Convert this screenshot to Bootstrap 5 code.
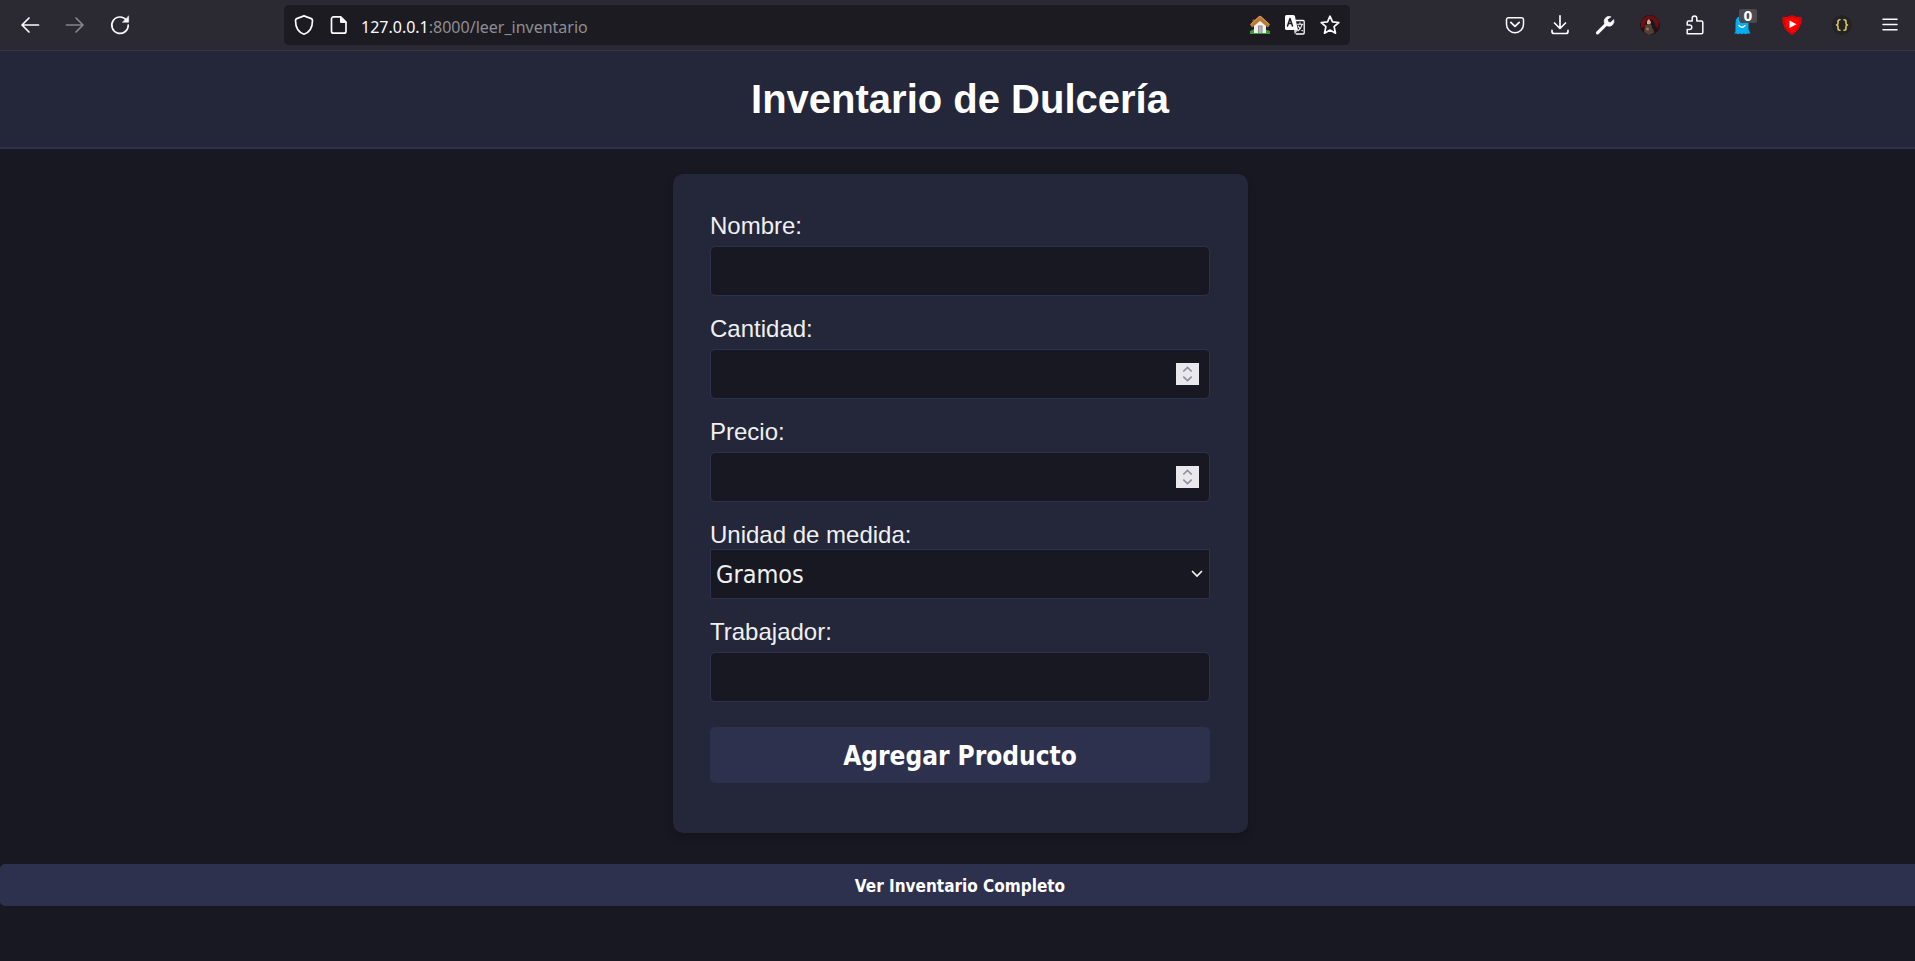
<!DOCTYPE html>
<html lang="es">
<head>
<meta charset="utf-8">
<meta name="viewport" content="width=device-width, initial-scale=1">
<title>Inventario de Dulcería</title>
<link rel="stylesheet" href="https://cdn.jsdelivr.net/npm/bootstrap@5.3.0/dist/css/bootstrap.min.css">
<style>
  :root { --ink: #181822; --panel: #24263a; --accent: #2e314d; --chrome: #2b2a33; }
  body { background: var(--ink); color: #f0f0f0; font-family: "Liberation Sans", Arial, sans-serif; overflow-x: hidden; }

  /* browser toolbar */
  .toolbar { height: 51px; background: var(--chrome); border-bottom: 1px solid #38383d; padding: 5px 3px 5px 7px; }
  .tool { width: 45px; height: 40px; padding: 0; border: 0; background: none; color: #fbfbfe; position: relative; }
  .tool-wide { width: 50px; }
  .tool:disabled { color: #85848b; }
  .tool svg { display: block; margin: auto; overflow: visible; fill: none; stroke: currentColor; stroke-width: 1.7; stroke-linecap: round; stroke-linejoin: round; }
  .tool svg.flat { stroke: none; }
  .spacer { flex: 0 1 142px; }
  .urlbar { height: 40px; background: #1c1b22; border-radius: 5px; padding: 0 3px 0 2px; color: #fbfbfe; min-width: 0; }
  .urlbar .tool { width: 35px; }
  .address { font: 16px/24px "Noto Sans", "Open Sans", sans-serif; color: #8f8e94; padding: 3px 0 0 5px; }
  .address b { font-weight: 400; color: #fbfbfe; }
  .counter { position: absolute; left: 22px; top: 4px; width: 18px; height: 14px; border-radius: 2px; background: #4a4a4f; color: #fff; font: bold 14px/14px "DejaVu Sans Condensed", sans-serif; }

  /* page */
  .page-head { background: var(--panel); border-bottom: 2px solid var(--accent); padding: 25px 0 25px 5px; }
  .page-head h1 { font-size: 40px; line-height: 46px; font-weight: 700; color: #fff; }
  .form-area { padding: 25px 0 31px 6px; }
  .panel { width: 100%; max-width: 575px; background: var(--panel); border-radius: 10px; padding: 37px 38px 50px 37px; box-shadow: 0 4px 8px rgba(0,0,0,.2); }
  .field { margin-bottom: 18px; }
  .field label { display: block; font-size: 24px; line-height: 29px; margin-bottom: 6px; }
  .field-tight label { margin-bottom: 0; }
  .field .form-control, .field .form-select { height: 50px; background-color: var(--ink); border: 1px solid var(--accent); color: #f0f0f0; border-radius: 5px; font-size: 24px; }
  .field .form-select { border-radius: 0; padding: 2px 30px 0 5px; font: 25px/44px "DejaVu Sans Condensed", Tahoma, sans-serif;
    background-image: url("data:image/svg+xml,%3Csvg xmlns='http://www.w3.org/2000/svg' viewBox='0 0 12 8'%3E%3Cpath d='M1.5 1.5 6 6l4.500-4.500' fill='none' stroke='%23f4f4f4' stroke-width='1.700' stroke-linecap='round'/%3E%3C/svg%3E");
    background-size: 12px 8px; background-position: right 6px center; }
  .field input[type=number] { appearance: textfield; -moz-appearance: textfield; padding-right: 40px; background-repeat: no-repeat; background-position: right 10px center; background-size: 23px 22px;
    background-image: url("data:image/svg+xml,%3Csvg xmlns='http://www.w3.org/2000/svg' viewBox='0 0 23 22'%3E%3Cpath fill='%23e9e9ed' d='M0 0h23v22H0z'/%3E%3Cpath d='m7.800 8 3.700-3.500L15.200 8M7.800 14.200l3.700 3.500 3.700-3.500' fill='none' stroke='%238f8f9d' stroke-width='1.700' stroke-linecap='round'/%3E%3C/svg%3E"); }
  .field input[type=number]::-webkit-inner-spin-button { appearance: none; -webkit-appearance: none; margin: 0; }
  .action { background: var(--accent); color: #fff; border: 0; border-radius: 5px; font-family: "DejaVu Sans Condensed", Tahoma, sans-serif; font-weight: 700; }
  .action:hover { background: #393d60; color: #fff; }
  .action-add { margin-top: 25px; padding: 13px 0 11px; font-size: 26px; line-height: 32px; }
  .action-all { padding: 12px 0 10px 5px; font-size: 17px; line-height: 20px; border-radius: 5px 0 0 5px; }
</style>
</head>
<body>

<nav class="toolbar d-flex align-items-center" aria-label="Navegador">
  <button class="tool" type="button" aria-label="Atrás"><svg width="20" height="20"><path d="M18.500 10H2M9 3 2 10l7 7"/></svg></button>
  <button class="tool" type="button" aria-label="Adelante" disabled><svg width="20" height="20"><path d="M1.500 10H18M11 3l7 7-7 7"/></svg></button>
  <button class="tool" type="button" aria-label="Recargar"><svg width="20" height="20"><path d="M16.500 5.200A8.200 8.200 0 1 0 18.200 10"/><path d="M18.600 1.300v5.900h-5.900z" fill="currentColor" stroke-width=".6"/></svg></button>
  <div class="spacer"></div>

  <div class="urlbar d-flex align-items-center flex-grow-1">
    <button class="tool" type="button" aria-label="Protección"><svg width="20" height="20"><path d="M10 .9 17.300 3.600Q18.500 4.100 18.500 5.500C18.500 12.500 15 17.500 10 19.200 5 17.500 1.500 12.500 1.500 5.500Q1.500 4.100 2.700 3.600z"/></svg></button>
    <button class="tool" type="button" aria-label="Información del sitio"><svg width="20" height="20"><path d="M4.500 1.900h7.200l5.300 5.300v9a2 2 0 0 1-2 2H4.500a2 2 0 0 1-2-2V3.900a2 2 0 0 1 2-2z"/><path d="M11.500 2v5.400H17z" fill="currentColor" stroke-width="1"/></svg></button>
    <div class="address flex-grow-1 text-truncate"><b>127.0.0.1</b>:8000/leer_inventario</div>
    <button class="tool" type="button" aria-label="Inicio"><svg class="flat" width="20" height="20"><path d="M0 16q4-3 10-2.500T20 16v3H0z" fill="#3f9a3c"/><path d="M4 9.500 10 4l6 5.500V18H4z" fill="#f1f0ee"/><path d="M2.500 4.500h3v4h-3z" fill="#9a5a2a"/><path d="M8 10.500h4.500V18H8z" fill="#8d8d8d"/><path d="M9 11.500h2.500V18H9z" fill="#b4b4b4"/><path d="M0 9.500 8.500 1.400q1.500-1.200 3 0L20 9.500 17.800 12.500 10 6 2.200 12.500z" fill="#b97a38"/><path d="M1 9.200 9 1.900q1-.8 2 0L19 9.200" stroke="#d99c50" stroke-width="1"/></svg></button>
    <button class="tool" type="button" aria-label="Traducir"><svg width="20" height="20"><path d="M11 5.500h7.200q1 0 1 1v11.500q0 1-1 1h-7" stroke-width="1.300"/><path d="M1.500 0h6.700q1.300 0 1.700 1.300L13 15H1.500Q0 15 0 13.500v-12Q0 0 1.500 0z" fill="#fbfbfe" stroke="none"/><path d="M9 15h4l-3.300 4.300z" fill="#d0d0d6" stroke="none"/><path d="M2.500 11 5 3.500 7.500 11M3.400 8.500h3.200" stroke="#1c1b22" stroke-width="1.500"/><path d="M12.500 9.300h5.300M15 7.700v1.600M17 9.800q-1 4-4 6M13.300 11q1.500 3.500 4.200 4.800" stroke-width="1.100"/></svg></button>
    <button class="tool" type="button" aria-label="Marcador"><svg width="20" height="20"><path d="m10 1.200 2.500 5.700 6.300.6-4.700 4.200 1.400 6.500L10 15l-5.500 3.200 1.400-6.500L1.200 7.500l6.300-.6z"/></svg></button>
  </div>

  <div class="spacer"></div>
  <button class="tool" type="button" aria-label="Pocket"><svg width="20" height="20"><path d="M3.500 2.700h13a2 2 0 0 1 2 2v4.500a8.500 8.500 0 0 1-17 0V4.700a2 2 0 0 1 2-2z" stroke-width="1.500"/><path d="m5.800 7.400 4.200 4 4.200-4" stroke-width="1.700"/></svg></button>
  <button class="tool" type="button" aria-label="Descargas"><svg width="20" height="20"><path d="M10 .8v12.500M4.500 8l5.500 5.500L15.500 8M2 15.300v1.200q0 2 2 2h12q2 0 2-2v-1.200"/></svg></button>
  <button class="tool" type="button" aria-label="Herramientas"><svg width="20" height="20"><path d="M2.500 17.800 11.500 8.800" stroke-width="3.200"/><path d="M15.800 1.700A5 5 0 0 0 9.300 7.800q.5 2.700 3.200 3.200a5 5 0 0 0 6.200-6.500l-3 3-2.600-.5-.5-2.500z" fill="currentColor" stroke-width=".6"/></svg></button>
  <button class="tool" type="button" aria-label="Perfil"><svg class="flat" width="20" height="20"><circle cx="10" cy="10" r="10" fill="#2c0d10"/><path d="M1 6q4-5 9-5.500 6 .5 9 6l-1 7-4-4-2-5-5 0-3 7-3 2z" fill="#6a1015"/><path d="M7 6l2-2 2 3-1 3-3-1z" fill="#d6a79e"/><path d="M5 10l5-1 3 3 1 6-5 2-5-3z" fill="#514039"/><path d="M12 4l3 5v7l-3-3z" fill="#15191b"/><circle cx="7.500" cy="14" r="1.500" fill="#a06e60"/></svg></button>
  <button class="tool" type="button" aria-label="Extensiones"><svg width="20" height="20"><path d="M2.200 18.800V14.500h2.300a2.300 2.300 0 0 0 0-4.600H2.200V7.500q0-1.500 1.500-1.500h3.500V3.200a2.300 2.300 0 0 1 4.600 0V6h4.500q1.500 0 1.500 1.500v10q0 1.300-1.300 1.300z" stroke-width="1.500"/></svg></button>
  <button class="tool tool-wide" type="button" aria-label="Ghostery"><svg class="flat" width="20" height="20"><path d="M3.500 8Q3.500 1 10 1t6.500 7v6.500l2 4-3 0-2 .8-1.800-.8-1.700.8-1.800-.8-1.700.8-2.500-.8H2q2-2 1.500-4z" fill="#00aef0"/><circle cx="8" cy="6.500" r="1.200" fill="#fff"/><path d="M7 10.500q3 3.500 6 0" stroke="#fff" stroke-width="1.400"/></svg><span class="counter">0</span></button>
  <button class="tool tool-wide" type="button" aria-label="Bloqueador de YouTube"><svg class="flat" width="20" height="20"><path d="M10 0q4 2.300 9.500 2.200Q21 13 10 20-1 13 .5 2.200 6 2.300 10 0z" fill="#f00000"/><path d="M10 1.800q3.500 1.700 8 1.900.5 8.700-8 14.300Q1.500 12.400 2 3.700q4.500-.2 8-1.900z" stroke="#b80000" stroke-width=".6" fill="#ff0000"/><path d="m7.500 5.500 7 3.800-7 3.800z" fill="#fff"/></svg></button>
  <button class="tool tool-wide" type="button" aria-label="JSON"><svg width="20" height="20"><circle cx="10" cy="10" r="10" fill="#232323" stroke="none"/><path d="M8 4.800q-2 0-2 1.700v1.800q0 1.500-1.500 1.700 1.500.2 1.500 1.700v1.800q0 1.700 2 1.700M12 4.800q2 0 2 1.700v1.800q0 1.500 1.500 1.700-1.500.2-1.500 1.700v1.800q0 1.700-2 1.700" stroke="#d9c95f" stroke-width="1.600"/></svg></button>
  <button class="tool" type="button" aria-label="Menú"><svg width="20" height="20"><path d="M3 4.200h14M3 9.500h14M3 14.800h14" stroke-width="1.500"/></svg></button>
</nav>

<header class="page-head text-center">
  <h1 class="m-0">Inventario de Dulcería</h1>
</header>

<main>
  <div class="form-area d-flex justify-content-center">
    <form class="panel">
      <div class="field"><label for="nombre">Nombre:</label><input class="form-control" type="text" id="nombre"></div>
      <div class="field"><label for="cantidad">Cantidad:</label><input class="form-control" type="number" id="cantidad"></div>
      <div class="field"><label for="precio">Precio:</label><input class="form-control" type="number" id="precio"></div>
      <div class="field field-tight"><label for="unidad">Unidad de medida:</label>
        <select class="form-select" id="unidad"><option>Gramos</option></select></div>
      <div class="field mb-0"><label for="trabajador">Trabajador:</label><input class="form-control" type="text" id="trabajador"></div>
      <button class="action action-add d-block w-100" type="button">Agregar Producto</button>
    </form>
  </div>
  <button class="action action-all d-block w-100" type="button">Ver Inventario Completo</button>
</main>

<script src="https://cdn.jsdelivr.net/npm/bootstrap@5.3.0/dist/js/bootstrap.bundle.min.js"></script>
</body>
</html>
